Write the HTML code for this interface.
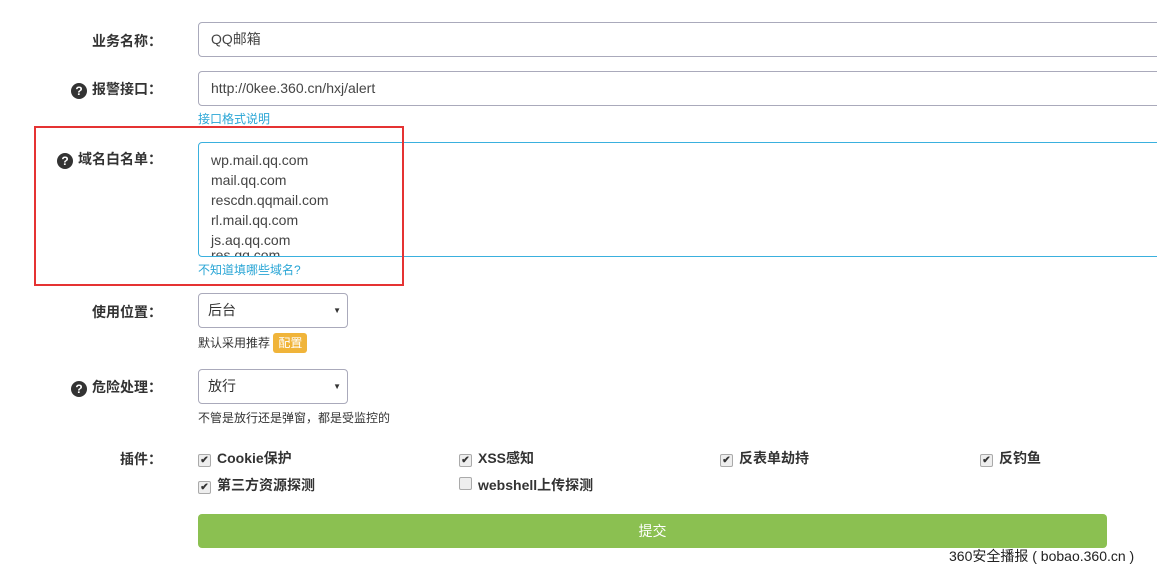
<!DOCTYPE html>
<html><head><meta charset="utf-8"><style>
body{margin:0;width:1157px;height:573px;background:#fff;font-family:"Liberation Sans","Noto Sans CJK SC",sans-serif;color:#333;position:relative;overflow:hidden;font-size:14px}
.a{position:absolute}
.lbl{position:absolute;right:995px;font-weight:bold;font-size:14px;white-space:nowrap}
.inp{position:absolute;left:198px;border:1px solid #aab;border-radius:4px;box-sizing:border-box;font-size:14px;color:#444;padding-left:12px}
.q{display:inline-block;width:16px;height:16px;border-radius:50%;background:#333;color:#fff;font-size:12px;text-align:center;line-height:16px;margin-right:5px;vertical-align:-1px}
.link{position:absolute;left:198px;color:#2aa6d6;font-size:12px}
.sm{position:absolute;left:198px;font-size:12px;color:#333}
.cb{position:absolute;font-weight:bold;font-size:14px;color:#333;white-space:nowrap}
.cb i{display:inline-block;width:11px;height:11px;border:1px solid #aaa;border-radius:2px;background:#eee;margin-right:6px;vertical-align:0;font-style:normal;font-size:10px;line-height:11px;text-align:center;color:#333}
.sel{position:absolute;left:198px;width:150px;height:35px;border:1px solid #aab;border-radius:4px;box-sizing:border-box;padding-left:9px;line-height:33px;font-size:14px}
.sel:after{content:"▼";position:absolute;right:6px;top:0;font-size:8px}
</style></head><body>
<div class="lbl" style="top:31px">业务名称：</div>
<div class="inp" style="top:22px;width:970px;height:35px;line-height:33px">QQ邮箱</div>
<div class="lbl" style="top:79px"><span class="q">?</span>报警接口：</div>
<div class="inp" style="top:71px;width:970px;height:35px;line-height:33px">http://0kee.360.cn/hxj/alert</div>
<div class="link" style="top:110px">接口格式说明</div>
<div class="lbl" style="top:149px;right:995px"><span class="q">?</span>域名白名单：</div>
<div class="inp" style="top:142px;width:970px;height:115px;border-color:#3ab0de;line-height:20px;padding-top:7px;overflow:hidden">wp.mail.qq.com<br>mail.qq.com<br>rescdn.qqmail.com<br>rl.mail.qq.com<br>js.aq.qq.com<br><span style="position:relative;top:-5px">res.qq.com</span></div>
<div class="link" style="top:261px">不知道填哪些域名?</div>
<div class="a" style="left:34px;top:126px;width:366px;height:156px;border:2px solid #e53333"></div>
<div class="lbl" style="top:302px">使用位置：</div>
<div class="sel" style="top:293px">后台</div>
<div class="sm" style="top:334px">默认采用推荐 <span style="background:#f0b43a;color:#fff;padding:3px 5px;border-radius:3px">配置</span></div>
<div class="lbl" style="top:377px"><span class="q">?</span>危险处理：</div>
<div class="sel" style="top:369px">放行</div>
<div class="sm" style="top:409px">不管是放行还是弹窗，都是受监控的</div>
<div class="lbl" style="top:449px">插件：</div>
<div class="cb" style="left:198px;top:448px"><i>✔</i>Cookie保护</div>
<div class="cb" style="left:459px;top:448px"><i>✔</i>XSS感知</div>
<div class="cb" style="left:720px;top:448px"><i>✔</i>反表单劫持</div>
<div class="cb" style="left:980px;top:448px"><i>✔</i>反钓鱼</div>
<div class="cb" style="left:198px;top:475px"><i>✔</i>第三方资源探测</div>
<div class="cb" style="left:459px;top:475px"><i></i>webshell上传探测</div>
<div class="a" style="left:198px;top:514px;width:909px;height:34px;background:#8bc051;border-radius:4px;color:#fff;text-align:center;line-height:34px">提交</div>
<div class="a" style="left:949px;top:546px;font-size:14px;color:#222">360安全播报 ( bobao.360.cn )</div>
</body></html>
